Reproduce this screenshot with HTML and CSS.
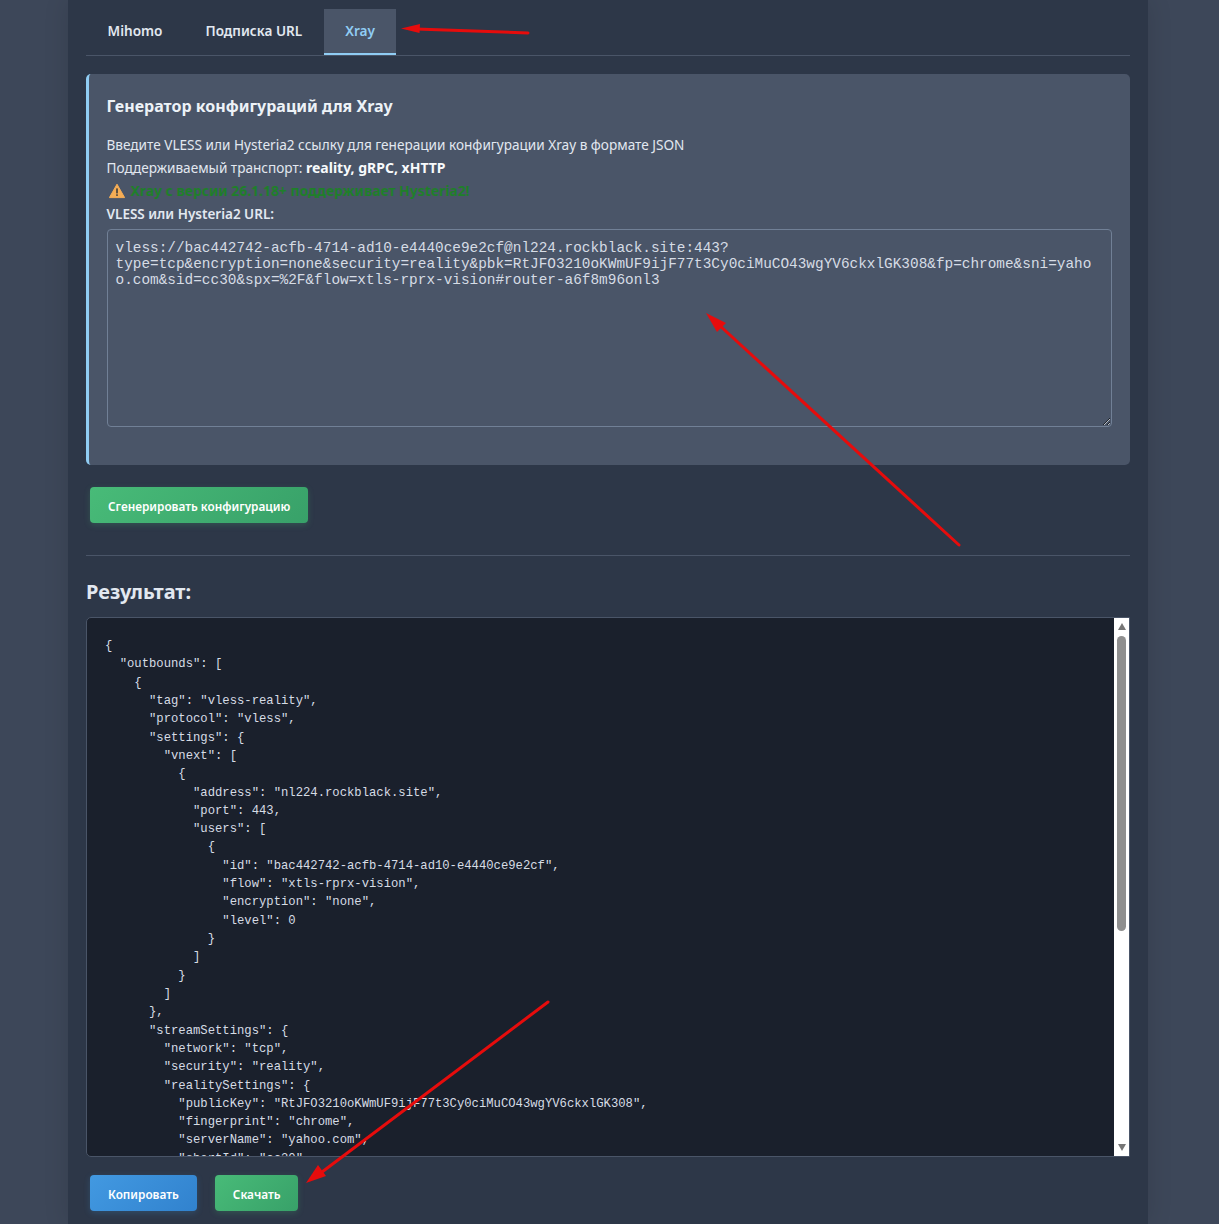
FILE: index.html
```html
<!DOCTYPE html>
<html lang="ru">
<head>
<meta charset="utf-8">
<title>Xray</title>
<link rel="stylesheet" href="styles.css">
</head>
<body>
<main class="container">
  <nav class="tabs">
    <button class="tab">Mihomo</button>
    <button class="tab">Подписка URL</button>
    <button class="tab active">Xray</button>
  </nav>
  <section class="panel">
    <h3 class="panel-title">Генератор конфигураций для Xray</h3>
    <p class="line">Введите VLESS или Hysteria2 ссылку для генерации конфигурации Xray в формате JSON</p>
    <p class="line">Поддерживаемый транспорт: <strong>reality, gRPC, xHTTP</strong></p>
    <p class="line warn"><svg class="warn-icon" viewBox="0 0 16 16" width="16" height="16"><path d="M8 1.2 15.6 14.6H.4Z" fill="#f6ad55" stroke="#f6ad55" stroke-linejoin="round"/><rect x="7.2" y="5.4" width="1.6" height="5" fill="#3b3b3b"/><rect x="7.2" y="11.3" width="1.6" height="1.6" fill="#3b3b3b"/></svg><span>Xray с версии 26.1.18+ поддерживает Hysteria2!</span></p>
    <label class="line field-label" for="url">VLESS или Hysteria2 URL:</label>
    <textarea id="url" class="url-input" spellcheck="false">vless://bac442742-acfb-4714-ad10-e4440ce9e2cf@nl224.rockblack.site:443?type=tcp&amp;encryption=none&amp;security=reality&amp;pbk=RtJFO3210oKWmUF9ijF77t3Cy0ciMuCO43wgYV6ckxlGK308&amp;fp=chrome&amp;sni=yahoo.com&amp;sid=cc30&amp;spx=%2F&amp;flow=xtls-rprx-vision#router-a6f8m96onl3</textarea>
  </section>
  <div class="actions actions-generate">
    <button class="btn btn-green">Сгенерировать конфигурацию</button>
  </div>
  <hr class="divider">
  <h2 class="result-title">Результат:</h2>
  <div class="code-box">
    <pre class="code">{
  "outbounds": [
    {
      "tag": "vless-reality",
      "protocol": "vless",
      "settings": {
        "vnext": [
          {
            "address": "nl224.rockblack.site",
            "port": 443,
            "users": [
              {
                "id": "bac442742-acfb-4714-ad10-e4440ce9e2cf",
                "flow": "xtls-rprx-vision",
                "encryption": "none",
                "level": 0
              }
            ]
          }
        ]
      },
      "streamSettings": {
        "network": "tcp",
        "security": "reality",
        "realitySettings": {
          "publicKey": "RtJFO3210oKWmUF9ijF77t3Cy0ciMuCO43wgYV6ckxlGK308",
          "fingerprint": "chrome",
          "serverName": "yahoo.com",
          "shortId": "cc30",
          "spiderX": "/"
        }
      }
    }
  ]
}</pre>
    <div class="scrollbar">
      <span class="sb-up"></span>
      <span class="sb-thumb"></span>
      <span class="sb-down"></span>
    </div>
  </div>
  <div class="actions actions-result">
    <button class="btn btn-blue">Копировать</button>
    <button class="btn btn-green">Скачать</button>
  </div>
</main>
<svg class="arrows" width="1219" height="1224" viewBox="0 0 1219 1224">
  <g fill="none" stroke="#e60c0c" stroke-width="3" stroke-linecap="round">
    <path d="M528 33 416 29"/>
    <path d="M959 545 718 324"/>
    <path d="M548 1002 322 1172"/>
  </g>
  <g fill="#e60c0c">
    <path d="M401 28.5 420 24 419.5 33Z"/>
    <path d="M706 313 726 323 717 332Z"/>
    <path d="M306 1183 318 1165 326 1176Z"/>
  </g>
</svg>
</body>
</html>
```
FILE: styles.css
```css
* { box-sizing: border-box; }
html, body { margin: 0; height: 1224px; overflow: hidden; }
body {
  position: relative;
  background: #3d4759;
  font-family: "Noto Sans", "Open Sans", "Liberation Sans", sans-serif;
  color: #e2e8f0;
  font-size: 13.6px;
}
.container {
  width: 1080px;
  height: 1224px;
  margin-left: 68px;
  padding: 9px 18px 0;
  background: #2d3748;
  box-shadow: 0 0 24px rgba(0, 0, 0, 0.12);
}
.tabs {
  display: flex;
  height: 47px;
  border-bottom: 1px solid #4a5568;
}
.tab {
  height: 46px;
  padding: 0 21.5px 2px;
  border: 0;
  border-bottom: 2px solid transparent;
  background: none;
  color: #e2e8f0;
  font: 600 13.6px "Noto Sans", sans-serif;
}
.tab.active {
  background: #4a5568;
  color: #90cdf4;
  border-bottom-color: #90cdf4;
}
.panel {
  height: 391px;
  margin-top: 18px;
  padding: 20px 18px 0 17.5px;
  background: #4a5568;
  border-left: 3px solid #90cdf4;
  border-radius: 5px;
}
.panel-title {
  margin: 0 0 15px;
  font-size: 16px;
  font-weight: 700;
  line-height: 24px;
  color: #edf2f7;
}
.line {
  display: block;
  margin: 0;
  line-height: 23px;
  color: #e2e8f0;
}
.line strong { font-size: 14px; font-weight: 700; color: #f7fafc; }
.warn {
  display: flex;
  align-items: center;
  gap: 6px;
  padding-left: 2px;
  font-size: 13.9px;
  font-weight: 700;
  color: #1f7f2a;
}
.warn-icon { flex: none; }
.field-label { margin-top: 1px; font-size: 13.5px; font-weight: 600; }
.url-input {
  display: block;
  width: 1005.5px;
  height: 198px;
  margin-top: 3px;
  padding: 10px 16px 10px 8px;
  background: #4a5568;
  border: 1px solid #718096;
  border-radius: 4px;
  color: #d6dce5;
  font: 14.4px/16px "Liberation Mono", monospace;
  outline: none;
}
.actions { display: flex; gap: 18px; padding-left: 4px; }
.actions-generate { margin-top: 22px; }
.actions-result { margin-top: 18px; }
.btn {
  height: 36px;
  padding: 1px 18px 0;
  border: 0;
  border-radius: 4px;
  color: #fff;
  font: 600 11.8px "Noto Sans", sans-serif;
}
.btn-green {
  background: linear-gradient(135deg, #48bb78, #38a169);
  box-shadow: 0 2px 6px rgba(72, 187, 120, 0.22);
}
.btn-blue {
  background: linear-gradient(135deg, #4299e1, #3182ce);
  box-shadow: 0 2px 6px rgba(66, 153, 225, 0.22);
}
.divider {
  height: 1px;
  margin: 32px 0 0;
  border: 0;
  background: #4a5568;
}
.result-title {
  margin: 21px 0 10px;
  font-size: 20px;
  font-weight: 700;
  line-height: 30px;
  color: #e2e8f0;
}
.code-box {
  display: flex;
  height: 540px;
  background: #1a202c;
  border: 1px solid #4a5568;
  border-radius: 5px 0 0 5px;
  overflow: hidden;
}
.code {
  flex: 1;
  margin: 0;
  padding: 19px 18px 0;
  overflow: hidden;
  color: #d6dce5;
  font: 12.22px/18.32px "Liberation Mono", monospace;
}
.scrollbar {
  flex: none;
  display: flex;
  flex-direction: column;
  align-items: center;
  position: relative;
  width: 15px;
  background: #fff;
}
.sb-up, .sb-down {
  position: absolute;
  width: 0;
  height: 0;
  border-left: 4.5px solid transparent;
  border-right: 4.5px solid transparent;
}
.sb-up { top: 5px; border-bottom: 7px solid #767676; }
.sb-down { bottom: 5px; border-top: 7px solid #767676; }
.sb-thumb {
  width: 9px;
  height: 295px;
  margin-top: 18px;
  background: #8f8f8f;
  border-radius: 5px;
}
.arrows {
  position: absolute;
  left: 0;
  top: 0;
  pointer-events: none;
}
```
